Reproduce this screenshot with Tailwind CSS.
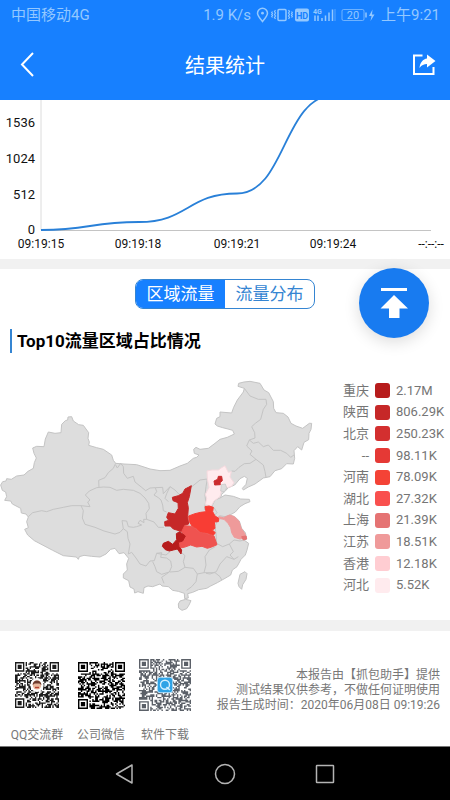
<!DOCTYPE html>
<html lang="zh-CN">

<head>
  <meta charset="UTF-8" />
  <meta name="viewport" content="width=device-width, initial-scale=1.0" />
  <title>结果统计</title>
  <script src="https://cdn.jsdelivr.net/npm/@tailwindcss/browser@4"></script>
</head>

<body class="min-h-screen flex flex-col bg-white font-[Roboto,'Noto_Sans_CJK_SC',sans-serif] text-black">
  <header class="bg-[#1780ff] text-white">
    <!-- Status bar -->
    <div class="h-[30px] pl-[11px] pr-[10px] flex items-center justify-between text-[15px] leading-5 text-[#94c8ff]">
      <span>中国移动4G</span>
      <div class="flex items-center gap-1">
        <span>1.9 K/s</span>
        <svg class="w-[122px] h-4" viewBox="0 0 122 16" fill="none" stroke="currentColor" stroke-width="1.5">
          <path d="M7.500 14.500C5 11.500 2.500 8.500 2.500 6.200a5 5 0 0 1 10 0C12.500 8.500 10 11.500 7.500 14.500z" />
          <circle cx="7.500" cy="6.200" r="1.400" fill="currentColor" stroke="none" />
          <rect x="23" y="2.500" width="8" height="11" rx="1" />
          <path d="M20.500 3l-1 1.500 1 1.500-1 1.500 1 1.500-1 1.500 1 1.500M17.500 4.500l-.8 1 .8 1-.8 1 .8 1-.8 1 .8 1M33.500 3l1 1.500-1 1.500 1 1.500-1 1.500 1 1.500-1 1.500M36.500 4.500l.8 1-.8 1 .8 1-.8 1 .8 1-.8 1" stroke-width="1.200" />
          <rect x="40" y="1.500" width="14" height="13" rx="2" fill="currentColor" stroke="none" />
          <text x="47" y="11.500" text-anchor="middle" font-size="9" font-weight="700" fill="#1780ff" stroke="none">HD</text>
          <text x="58" y="6.500" font-size="7" font-weight="700" fill="currentColor" stroke="none">4G</text>
          <path d="M60 8.500v5.500M63 8.500v5.500M67 11v3M70.500 8.500v5.500M74 5.500v8.500M77.500 2.500v11.500" />
          <path d="M80 2v12" stroke-opacity=".35" />
          <rect x="87" y="2.500" width="22" height="11" rx="1.500" stroke-width="1" stroke-opacity=".7" />
          <text x="98" y="11.800" text-anchor="middle" font-size="11" fill="currentColor" stroke="none">20</text>
          <path d="M111 5.500v5" />
          <path d="M117.500 2.500L114 9h2.500l-1 5 4-6.500h-2.500z" fill="currentColor" stroke="none" />
        </svg>
        <span>上午9:21</span>
      </div>
    </div>
    <!-- Title bar -->
    <div class="h-[70px] px-[14px] flex items-center justify-between">
      <button type="button" aria-label="返回" class="w-6 h-7">
        <svg class="w-6 h-7" viewBox="0 0 24 28" fill="none" stroke="currentColor" stroke-width="2">
          <path d="M19 2L8 13.500L19 25" />
        </svg>
      </button>
      <h1 class="pt-[2px] text-xl leading-7">结果统计</h1>
      <button type="button" aria-label="分享" class="w-6 h-6">
        <svg class="w-6 h-6" viewBox="0 0 24 24" fill="none" stroke="currentColor" stroke-width="2">
          <path d="M10.500 2.500H2v18.500h19.500v-7" />
          <path d="M15 1.500L23.500 8 15 14.500V11c-3 0-5.500 1-7.500 4 .5-5.500 3.500-9 7.500-9.500z" fill="currentColor" stroke="none" />
        </svg>
      </button>
    </div>
  </header>

  <main class="grow">
    <!-- Traffic line chart -->
    <svg class="block w-full h-auto" viewBox="0 0 450 159" fill="#111">
      <path d="M41 0V130" stroke="#dcdcdc" />
      <path d="M41 130.500H431" stroke="#c4c4c4" />
      <path d="M41 130C90 130 90 122 139 122C188 122 188 93.500 237 93.500C286 93.500 283 -5 335 -5" fill="none" stroke="#2980d8" stroke-width="1.800" />
      <g text-anchor="end" font-size="13">
        <text x="35" y="27">1536</text>
        <text x="35" y="63">1024</text>
        <text x="35" y="99">512</text>
        <text x="35" y="134">0</text>
      </g>
      <g text-anchor="middle" font-size="12">
        <text x="41" y="148">09:19:15</text>
        <text x="138" y="148">09:19:18</text>
        <text x="237" y="148">09:19:21</text>
        <text x="333" y="148">09:19:24</text>
        <text x="431" y="148">--:--:--</text>
      </g>
    </svg>

    <!-- Region traffic -->
    <section class="relative border-t-10 border-b-11 border-[#f1f1f1] pt-[10px]">
      <div class="flex w-[180px] h-[30px] mx-auto border border-[#3585d2] rounded-lg overflow-hidden text-[17px] leading-7">
        <button type="button" class="flex-1 bg-[#1780ff] text-white">区域流量</button>
        <button type="button" class="flex-1 text-[#3585d2]">流量分布</button>
      </div>
      <button type="button" aria-label="回到顶部"
        class="absolute -top-px right-[21px] w-[70px] h-[70px] rounded-full bg-[#187bf0] shadow-[0_4px_16px_rgba(0,0,0,0.14)]">
        <svg class="w-full h-full" viewBox="0 0 70 70" fill="#fff">
          <path d="M22 20h26v3H22zM35 27L49 40.500H40.500V50H30V40.500H21.500z" />
        </svg>
      </button>

      <h2 class="mt-5 ml-[10px] pl-[5px] border-l-2 border-[#3585d2] text-[17px] leading-6 font-bold">Top10流量区域占比情况</h2>

      <div class="mt-[17px] flex items-start">
        <svg class="flex-1 min-w-0 h-auto" viewBox="0 0 960 750" fill="#dddddd" stroke="#c4c4c4" stroke-width="3" stroke-linejoin="round">
          <!-- Mainland -->
          <path d="M2 345L8 335L18 333L20 326L34 328L50 318L72 315L84 304L100 295L103 278L109 264L102 250L98 234L110 229L132 230L136 207L145 186L165 190L183 188L185 163L196 152L203 150L204 141L215 140L220 153L236 164L250 166L266 188L264 205L268 216L266 226L290 233L310 238L335 255L340 271L347 280L372 282L410 284L435 292L450 297L480 302L510 301L540 288L562 280L580 265L590 262L597 255L583 250L581 238L588 232L600 238L625 235L645 220L660 208L682 202L703 192L698 181L684 177L668 173L652 168L645 162L650 145L660 140L660 126L695 129L701 112L712 90L730 66L733 55L714 49L716 40L732 36L750 34L780 40L792 60L806 68L820 95L821 115L828 128L850 130L864 141L873 160L888 168L908 175L928 160L935 160L933 178L927 190L926 209L912 217L905 240L893 230L882 242L884 265L880 282L860 281L845 296L825 302L810 320L790 324L765 342L745 351L730 360L727 355L738 343L742 325L733 319L720 326L704 345L685 353L675 364L665 373L662 383L675 375L700 379L722 387L748 388L750 395L735 401L720 410L706 426L690 435L704 440L718 453L725 475L736 488L740 505L733 511L746 520L741 540L736 555L723 568L711 590L697 600L692 615L675 625L652 638L632 648L620 655L596 659L578 667L563 671L565 684L554 686L553 670L535 664L518 661L505 650L486 648L480 642L458 650L444 648L432 653L430 670L414 665L404 669L402 657L390 651L386 632L370 624L370 612L382 600L380 582L386 565L372 548L357 551L345 535L332 538L318 552L300 561L275 559L252 556L238 560L235 568L229 561L190 557L158 541L120 521L103 512L83 495L74 478L85 473L80 455L85 441L78 432L64 429L62 415L37 402L32 393L14 391L20 380L17 366L7 361Z" />
          <path d="M535 702L540 693L557 688L573 692L567 705L560 716L546 721L536 714Z" />
          <path d="M714 640L720 613L735 605L741 611L738 628L728 644L725 658L717 650Z" />
          <!-- Provincial borders -->
          <g fill="none" stroke-width="3">
            <path d="M85 440L98 428L125 422L140 425L160 418L190 412L215 407L243 407L270 410L263 396L270 390L256 375L268 363L290 353L310 351L330 352L350 361L370 358L400 361L420 370L435 384L446 400L448 416L438 430L440 448L431 448L432 458L420 451L414 460L425 465L410 470L400 472L385 470L380 453L366 452L370 476L360 487L345 492L312 483L285 472L255 463L247 444L250 422L243 407" />
            <path d="M347 280L340 295L325 308L315 323L296 331L297 353M347 285L352 294L362 280L370 290L371 310L382 325L400 319L405 336L425 352L437 362L450 354L466 353L470 365L462 375L475 383L483 390L488 405L490 422L500 426" />
            <path d="M370 476L382 485L384 505L390 522L385 552L395 547L408 564L420 582L438 588L450 573L463 572L470 550L485 548L482 562L500 564L512 573L515 590L508 606L485 613L470 605L465 590L458 575M440 448L462 456L475 472L492 472" />
            <path d="M508 606L485 622L492 640M466 353L488 352L490 371L510 350L525 360L540 376L535 395M510 350L500 371L495 385L505 395" />
            <path d="M573 352L600 330L622 327M622 327L618 350L615 375L617 395L613 420" />
            <path d="M733 55L750 78L775 88L798 88L800 103L790 118L782 148L766 160L755 170L764 188L765 204L748 210L760 220L775 216L790 230L805 225L820 241L842 241L860 250L872 262L882 255M748 210L740 228L756 243L750 253L768 268L790 285L795 305L798 322M768 268L750 280L733 281L717 292L705 304L695 303" />
            <path d="M640 439L651 428L643 414L635 410L645 390L662 383M690 435L675 440L658 437M652 450L645 470L648 490L650 520M650 520L668 530L688 522L702 510L720 513L740 508M688 522L700 545L690 555L702 568L715 560M702 568L680 560L660 582L649 605L630 612L618 610" />
            <path d="M545 548L555 557L550 575L555 592L580 595L592 612L612 608L618 585L615 560L628 540L646 530M555 592L535 604L510 606M592 612L588 635L575 650L560 661M612 608L645 608L660 620L665 630M470 550L498 555L510 545" />
          </g>
          <!-- Hebei, Tianjin, Beijing -->
          <path d="M622 327L621 303L636 300L655 300L663 294L675 287L685 307L694 305L690 321L702 338L695 349L681 353L673 345L665 350L663 367L660 380L642 393L634 408L616 404L620 385L616 373L627 352L624 337Z" fill="#ffebee" stroke="#f4dade" />
          <path d="M664 344L676 342L680 353L674 365L662 363Z" stroke-width="2" />
          <path d="M642 333L653 328L655 319L665 319L667 332L660 338L661 344L644 345Z" fill="#cb2c2f" stroke="#cb2c2f" />
          <!-- Shaanxi -->
          <path d="M574 347L565 352L555 357L548 370L535 377L517 382L519 392L534 398L535 415L525 432L515 430L505 428L500 442L506 451L494 455L495 468L511 468L520 477L540 483L555 489L553 466L566 462L563 440L565 413L562 398L568 380Z" fill="#c62828" stroke="#c62828" />
          <!-- Henan -->
          <path d="M566 438L585 431L602 427L618 425L615 410L627 408L640 412L638 425L645 438L657 445L655 455L643 456L645 475L637 480L646 488L640 496L622 490L600 486L590 476L576 468L568 455Z" fill="#f83d34" stroke="#f83d34" />
          <!-- Hubei -->
          <path d="M554 467L574 469L590 478L600 487L625 493L642 498L651 524L635 531L622 535L606 529L590 531L572 525L555 531L538 535L535 517L548 513L555 500L545 485Z" fill="#ef5350" stroke="#ef5350" />
          <!-- Chongqing -->
          <path d="M539 485L556 498L548 513L535 517L537 530L545 540L543 552L532 537L520 540L508 543L496 539L487 529L490 520L505 514L518 523L530 509L529 491Z" fill="#b71c1c" stroke="#b71c1c" />
          <!-- Jiangsu, Shanghai -->
          <path d="M656 440L671 443L688 435L703 440L717 454L723 474L734 490L738 501L720 507L703 502L695 488L692 473L684 460L672 448L660 446Z" fill="#ef9a9a" stroke="#ef9a9a" />
          <path d="M725 500L738 498L740 507L730 510Z" fill="#e57373" stroke="#e57373" />
        </svg>

        <ul class="w-[130px] shrink-0 h-[216px] mt-[10px] pl-[23px] grid grid-rows-10 items-center text-[13px] leading-5 text-[#757575]">
          <li class="flex items-center gap-[6px]"><span class="w-[26px] text-right">重庆</span><i class="w-[15px] h-[15px] rounded-[3px] bg-[#b71c1c]"></i><span>2.17M</span></li>
          <li class="flex items-center gap-[6px]"><span class="w-[26px] text-right">陕西</span><i class="w-[15px] h-[15px] rounded-[3px] bg-[#c62828]"></i><span>806.29K</span></li>
          <li class="flex items-center gap-[6px]"><span class="w-[26px] text-right">北京</span><i class="w-[15px] h-[15px] rounded-[3px] bg-[#d32f2f]"></i><span>250.23K</span></li>
          <li class="flex items-center gap-[6px]"><span class="w-[26px] text-right">--</span><i class="w-[15px] h-[15px] rounded-[3px] bg-[#e53935]"></i><span>98.11K</span></li>
          <li class="flex items-center gap-[6px]"><span class="w-[26px] text-right">河南</span><i class="w-[15px] h-[15px] rounded-[3px] bg-[#f44336]"></i><span>78.09K</span></li>
          <li class="flex items-center gap-[6px]"><span class="w-[26px] text-right">湖北</span><i class="w-[15px] h-[15px] rounded-[3px] bg-[#f9504e]"></i><span>27.32K</span></li>
          <li class="flex items-center gap-[6px]"><span class="w-[26px] text-right">上海</span><i class="w-[15px] h-[15px] rounded-[3px] bg-[#e57373]"></i><span>21.39K</span></li>
          <li class="flex items-center gap-[6px]"><span class="w-[26px] text-right">江苏</span><i class="w-[15px] h-[15px] rounded-[3px] bg-[#ef9a9a]"></i><span>18.51K</span></li>
          <li class="flex items-center gap-[6px]"><span class="w-[26px] text-right">香港</span><i class="w-[15px] h-[15px] rounded-[3px] bg-[#ffcdd2]"></i><span>12.18K</span></li>
          <li class="flex items-center gap-[6px]"><span class="w-[26px] text-right">河北</span><i class="w-[15px] h-[15px] rounded-[3px] bg-[#ffebee]"></i><span>5.52K</span></li>
        </ul>
      </div>
    </section>

    <!-- QR codes and report note -->
    <section class="pt-[26px] pl-[5px] pr-[10px] flex justify-between text-xs text-[#777]">
      <div class="flex text-center">
        <figure class="w-16">
          <div class="h-14 flex items-center justify-center">
            <svg class="w-[44px] h-[46px]" viewBox="0 0 33 33" preserveAspectRatio="none">
              <path class="qr" data-size="33" data-seed="7" fill="#1c1c1c" />
              <circle cx="16.500" cy="16.500" r="5" fill="#fff" />
              <circle cx="16.500" cy="16.500" r="3.200" fill="#e8b79c" />
              <path d="M13.200 16.500a3.300 3.300 0 0 1 6.600 0l-1.500-1-3.500 0z" fill="#6b3a2c" />
              <path d="M15 18.300h3" stroke="#b5402f" stroke-width="1" />
            </svg>
          </div>
          <figcaption class="mt-3 leading-5">QQ交流群</figcaption>
        </figure>
        <figure class="w-16">
          <div class="h-14 flex items-center justify-center">
            <svg class="w-[47px] h-[47px]" viewBox="0 0 33 33">
              <path class="qr" data-size="33" data-seed="23" fill="#000" />
            </svg>
          </div>
          <figcaption class="mt-3 leading-5">公司微信</figcaption>
        </figure>
        <figure class="w-16">
          <div class="h-14 flex items-center justify-center">
            <svg class="w-[52px] h-[52px]" viewBox="0 0 37 37">
              <path class="qr" data-size="37" data-seed="41" fill="#5b6068" />
              <rect x="13" y="13" width="11" height="11" rx="2" fill="#2ea3e6" stroke="#d5efff" stroke-width=".6" />
              <circle cx="18.500" cy="18.300" r="3.200" fill="none" stroke="#d5f1ff" stroke-width="1" />
              <path d="M19.500 20l2.500 2" stroke="#d5f1ff" stroke-width="1" />
            </svg>
          </div>
          <figcaption class="mt-3 leading-5">软件下载</figcaption>
        </figure>
      </div>
      <div class="pt-[11px] text-right leading-[15px] whitespace-nowrap">
        <p>本报告由【抓包助手】提供</p>
        <p>测试结果仅供参考，不做任何证明使用</p>
        <p>报告生成时间：2020年06月08日 09:19:26</p>
      </div>
    </section>
  </main>

  <!-- System navigation -->
  <nav class="h-[54px] bg-black border-t border-[#777] flex items-center justify-center text-[#b4b4b4]">
    <button type="button" aria-label="后退" class="w-[100px] flex justify-center">
      <svg class="w-6 h-6" viewBox="0 0 24 24" fill="none" stroke="currentColor" stroke-width="1.500"><path d="M19 3v18L3.500 12z" stroke-linejoin="round" /></svg>
    </button>
    <button type="button" aria-label="主页" class="w-[100px] flex justify-center">
      <svg class="w-6 h-6" viewBox="0 0 24 24" fill="none" stroke="currentColor" stroke-width="1.500"><circle cx="12" cy="12" r="9.500" /></svg>
    </button>
    <button type="button" aria-label="最近任务" class="w-[100px] flex justify-center">
      <svg class="w-6 h-6" viewBox="0 0 24 24" fill="none" stroke="currentColor" stroke-width="1.500"><rect x="3.500" y="3.500" width="17" height="17" rx=".5" /></svg>
    </button>
  </nav>

  <script>
    // Fill each code with finder squares and a seeded module pattern
    document.querySelectorAll(".qr").forEach((path) => {
      const size = Number(path.dataset.size);
      let seed = Number(path.dataset.seed);
      let d = "";

      function inFinder(x, y) {
        return (x < 8 && y < 8) || (x > size - 9 && y < 8) || (x < 8 && y > size - 9);
      }

      for (let y = 0; y < size; y++) {
        for (let x = 0; x < size; x++) {
          seed = (seed * 1103515245 + 12345) % 2147483648;
          if (!inFinder(x, y) && (seed >> 16) % 100 < 56) d += `M${x} ${y}h1v1h-1z`;
        }
      }

      [[0, 0], [size - 7, 0], [0, size - 7]].forEach(([x, y]) => {
        d += `M${x} ${y}h7v7h-7zM${x + 1} ${y + 1}v5h5v-5zM${x + 2} ${y + 2}h3v3h-3z`;
      });
      path.setAttribute("d", d);
    });
  </script>
</body>

</html>
